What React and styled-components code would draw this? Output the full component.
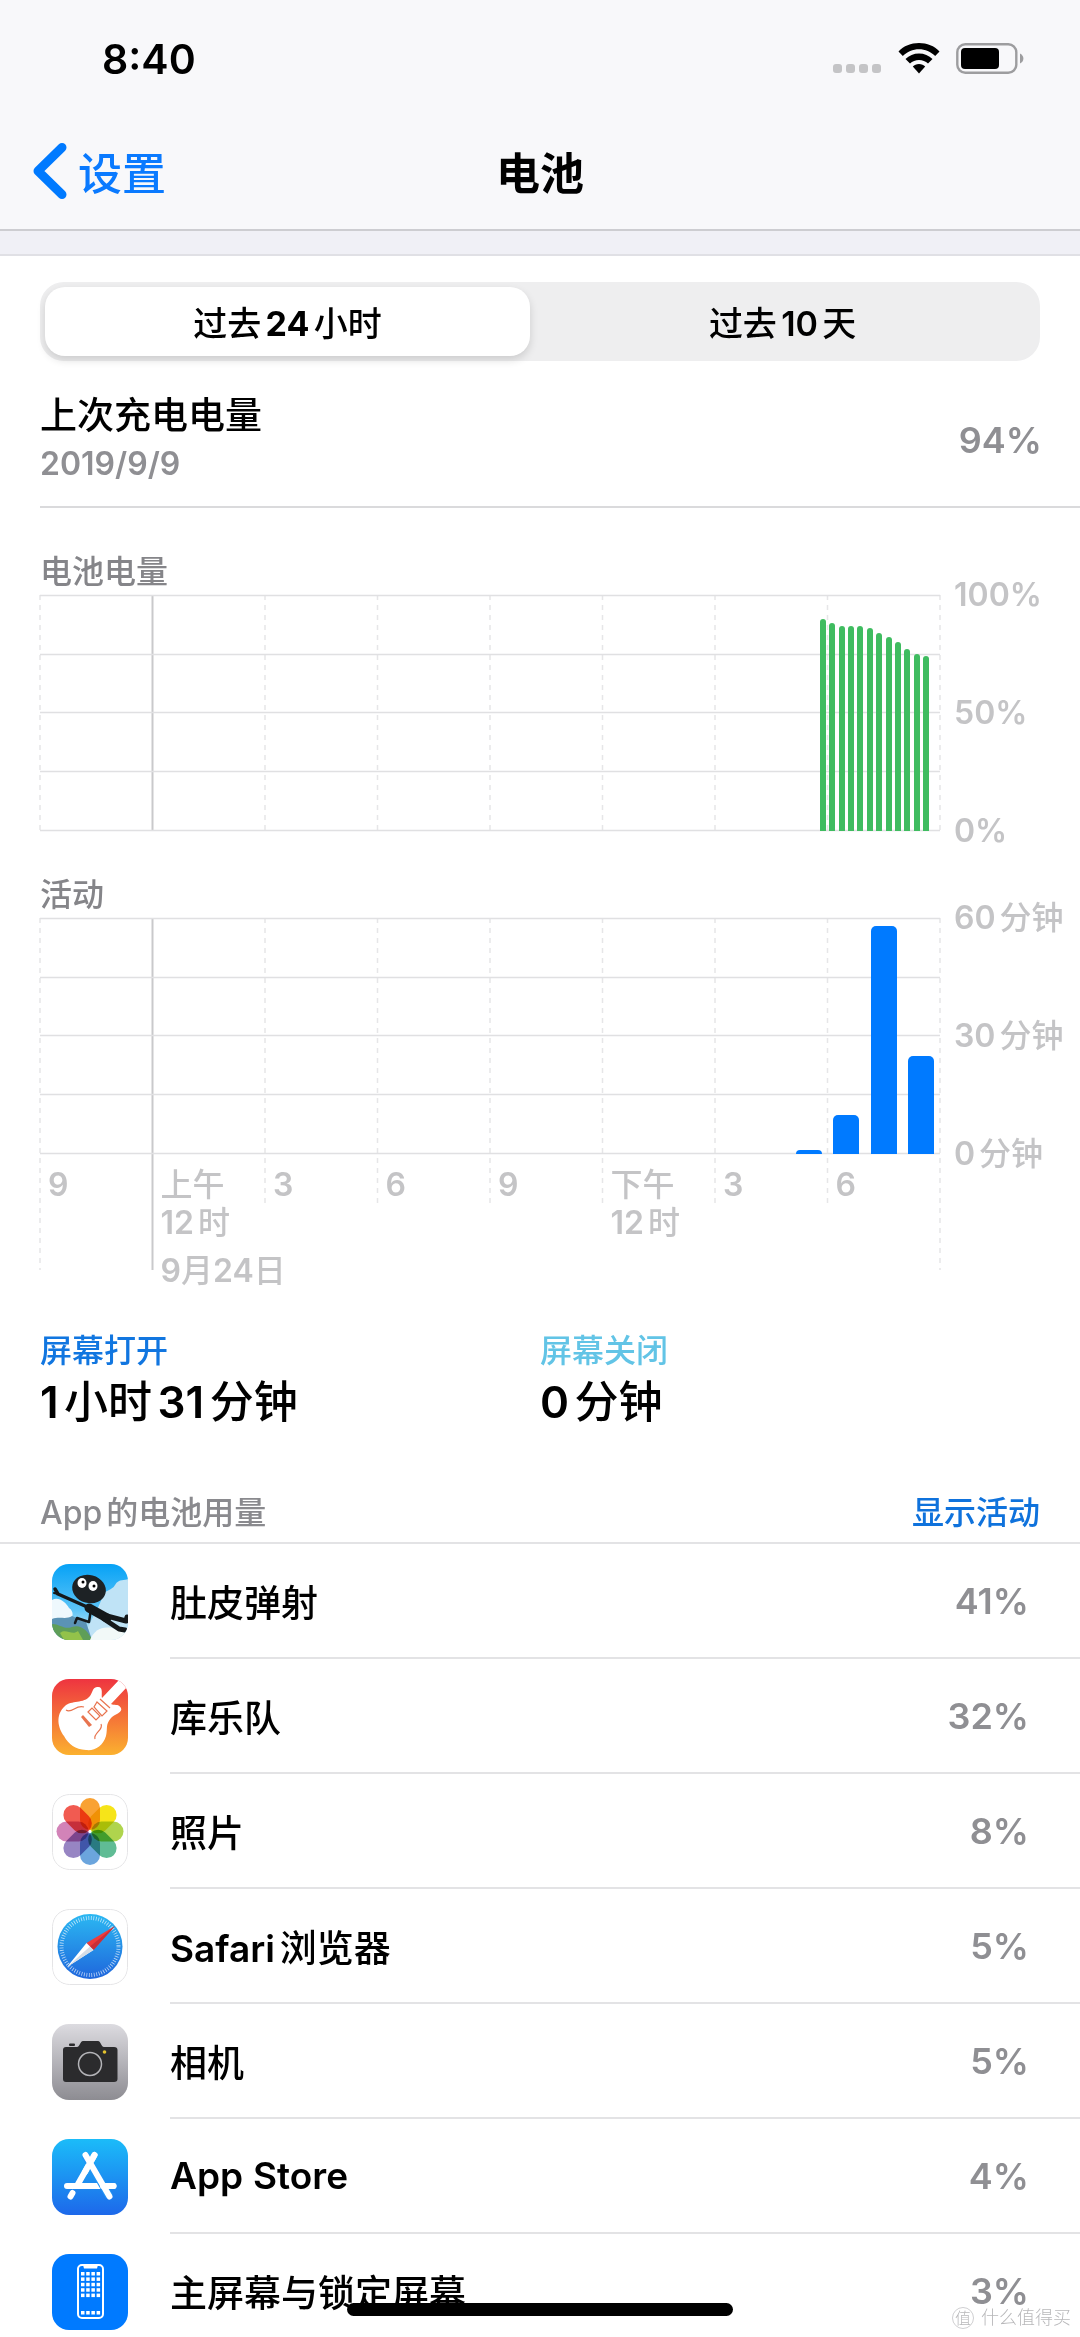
import { useState } from "react"
import styled, { createGlobalStyle } from "styled-components"

const GlobalStyle = createGlobalStyle`
  * {
    box-sizing: border-box;
  }

  body {
    margin: 0;
    background: #ffffff;
    color: #000000;
    font-family: Inter, "Noto Sans CJK SC", sans-serif;
    font-weight: 500;
    text-autospace: normal;
  }

  button {
    padding: 0;
    border: none;
    background: none;
    font: inherit;
    color: inherit;
    cursor: pointer;
  }
`

const Screen = styled.div`
  height: 100vh;
  display: flex;
  flex-direction: column;
`

const Header = styled.header`
  background: #f8f8fa;
  border-bottom: 2px solid #cdcdd1;
`

const StatusBar = styled.div`
  display: flex;
  justify-content: space-between;
  align-items: center;
  height: 117px;
  padding: 0 56px 0 102px;
`

const Clock = styled.time`
  font-size: 41px;
  font-weight: 600;
`

const StatusIcons = styled.div`
  display: flex;
  align-items: flex-end;
  gap: 16px;
`

const NavBar = styled.nav`
  display: grid;
  grid-template-columns: 1fr auto 1fr;
  align-items: center;
  height: 112px;
  padding: 0 32px 4px;
  font-size: 44px;
`

const BackLink = styled.a`
  display: flex;
  align-items: center;
  gap: 10px;
  color: #0a7aff;
  text-decoration: none;
`

const Title = styled.h1`
  margin: 0;
  font-size: 44px;
  font-weight: 700;
`

const Content = styled.main`
  flex: 1;
  overflow-y: auto;
  scrollbar-width: none;
`

const Band = styled.div`
  height: 25px;
  background: #f0f0f6;
  border-bottom: 2px solid #e0e0e5;
`

const Segmented = styled.div`
  display: grid;
  grid-template-columns: 49fr 51fr;
  margin: 26px 40px 0;
  padding: 5px;
  border-radius: 24px;
  background: #eeeeef;
`

const Segment = styled.button`
  height: 69px;
  border-radius: 20px;
  font-size: 34px;
  font-weight: ${(props) => (props.$active ? 700 : 600)};
  background: ${(props) => (props.$active ? "#ffffff" : "transparent")};
  box-shadow: ${(props) => (props.$active ? "0 4px 8px rgba(0, 0, 0, 0.14)" : "none")};
`

const SegmentText = styled.span`
  font-weight: 500;
`

const LastCharge = styled.section`
  display: flex;
  justify-content: space-between;
  align-items: center;
  margin-left: 40px;
  padding: 31px 38px 18px 0;
  border-bottom: 2px solid #dadadc;
`

const ChargeTitle = styled.div`
  font-size: 37px;
  line-height: 48px;
`

const ChargeDate = styled.div`
  font-size: 32px;
  font-weight: 600;
  line-height: 48px;
  color: #8f8f93;
`

const Percent = styled.span`
  font-size: 36px;
  font-weight: 600;
  line-height: 36px;
  color: #8f8f93;
`

const Latin = styled.span`
  font-weight: 600;
`

const Figure = styled.figure`
  margin: 0;
  padding: 44px 0 0 40px;
`

const FigureTitle = styled.figcaption`
  margin-bottom: 3px;
  font-size: 32px;
  line-height: 40px;
  color: #858589;
`

const ChartRow = styled.div`
  display: grid;
  grid-template-columns: 1fr 140px;
  align-items: start;
`

const PlotArea = styled.div`
  display: grid;

  > * {
    grid-area: 1 / 1;
  }
`

const Grid = styled.svg`
  display: block;
  width: 100%;
  height: ${(props) => props.$height}px;
  overflow: visible;
`

const Bars = styled.div`
  z-index: 1;
  display: flex;
  justify-content: flex-end;
  align-items: flex-end;
  height: 236px;
`

const Slot = styled.div`
  display: flex;
  justify-content: center;
  align-items: flex-end;
  width: calc(100% / ${(props) => props.$count});
  height: 100%;
`

const Bar = styled.div`
  width: ${(props) => props.$width}px;
  border-radius: ${(props) => props.$radius}px ${(props) => props.$radius}px 0 0;
  background: ${(props) => props.$color};
`

const Scale = styled.div`
  display: flex;
  flex-direction: column;
  justify-content: space-between;
  height: 276px;
  margin: -20px 0;
  padding-left: 14px;
  font-size: 32px;
  line-height: 40px;
  color: #c4c4c6;
  white-space: nowrap;
`

const TimeAxis = styled.div`
  align-self: end;
  display: grid;
  grid-template-columns: repeat(8, 1fr);
  row-gap: 10px;
  font-size: 32px;
  line-height: 38px;
  color: #c4c4c6;
`

const Tick = styled.div`
  height: 76px;
  padding-left: 8px;
  white-space: pre-line;
`

const AxisDate = styled.div`
  grid-column: 2 / 5;
  padding-left: 8px;
  text-autospace: no-autospace;
`

const Totals = styled.section`
  display: grid;
  grid-template-columns: 1fr 1fr;
  padding: 41px 40px 0;
`

const TotalLabel = styled.div`
  font-size: 32px;
  line-height: 40px;
  color: ${(props) => props.$color};
`

const TotalValue = styled.div`
  font-size: 44px;
  line-height: 62px;
`

const ListHeader = styled.div`
  display: flex;
  justify-content: space-between;
  padding: 60px 40px 9px;
  border-bottom: 2px solid #e3e3e5;
  font-size: 32px;
  line-height: 40px;
`

const ListTitle = styled.h2`
  margin: 0;
  font-size: 32px;
  font-weight: 500;
  color: #8a8a8e;
`

const ShowActivity = styled.button`
  color: #0f72dc;
`

const AppList = styled.ul`
  margin: 0;
  padding: 0;
  list-style: none;
`

const AppRow = styled.li`
  display: flex;
  align-items: center;
  gap: 42px;
  padding-left: 52px;
`

const AppInfo = styled.div`
  flex: 1;
  display: flex;
  justify-content: space-between;
  align-items: center;
  height: 115px;
  padding-right: 51px;
  border-bottom: 2px solid #e3e3e5;
  font-size: 37px;
`

const AppIcon = styled.svg`
  flex: none;
  width: 76px;
  height: 76px;
  border-radius: 17px;
`

const HomeIndicator = styled.div`
  position: fixed;
  left: 50%;
  bottom: 21px;
  width: 386px;
  height: 13px;
  margin-left: -193px;
  border-radius: 7px;
  background: #000000;
`

const Watermark = styled.div`
  position: fixed;
  right: 9px;
  bottom: 8px;
  display: flex;
  align-items: center;
  gap: 7px;
  font-size: 18px;
  font-weight: 300;
  line-height: 20px;
  color: #b8b8ba;
`

const WatermarkBadge = styled.span`
  width: 22px;
  height: 22px;
  border: 1px solid #cfcfd1;
  border-radius: 50%;
  font-size: 16px;
  line-height: 20px;
  text-align: center;
`

const levels = [90, 88, 87, 87, 87, 86, 84, 82, 80, 77, 75, 74]
const minutes = [1, 10, 58, 25]
const ticks = ["9", "上午\n12时", "3", "6", "9", "下午\n12时", "3", "6"]

// digits and latin words run one step heavier than the Chinese around them
const Mixed = ({ children }) =>
  children
    .split(/([A-Za-z0-9%]+)/)
    .map((part, i) => (i % 2 ? <Latin key={i}>{part}</Latin> : part))

const SignalDots = () => (
  <svg width="49" height="10" viewBox="0 0 49 10" fill="#c4c4c6">
    {[0, 13, 26, 39].map((x) => (
      <rect key={x} x={x} y="0" width="9" height="9" rx="3" />
    ))}
  </svg>
)

const Wifi = () => (
  <svg width="42" height="31" viewBox="0 0 42 31">
    <path d="M21 0C29 0 36.400 3 41.500 8.400L37.200 13C32.800 8.800 27.200 6.300 21 6.300S9.200 8.800 4.800 13L.5 8.400C5.600 3 13 0 21 0Z" />
    <path d="M21 10.500C26.200 10.500 31 12.500 34.500 16L30 20.600C27.600 18.300 24.500 17 21 17S14.400 18.300 12 20.600L7.500 16C11 12.500 15.800 10.500 21 10.500Z" />
    <path d="M21 21C23.700 21 25.600 22 27.200 23.600L21 30.600L14.800 23.600C16.400 22 18.300 21 21 21Z" />
  </svg>
)

const BatteryStatus = () => (
  <svg width="68" height="31" viewBox="0 0 68 31">
    <rect x="1.300" y="1.300" width="59" height="28.400" rx="8" fill="none" stroke="#9d9d9f" strokeWidth="2.400" />
    <rect x="5" y="5" width="38" height="21" rx="4" />
    <path d="M64 10.500C68.500 12.500 68.500 18.500 64 20.500Z" fill="#9d9d9f" />
  </svg>
)

const Chevron = () => (
  <svg width="36" height="58" viewBox="0 0 36 58" fill="none" stroke="#007aff" strokeWidth="9" strokeLinecap="round" strokeLinejoin="round">
    <path d="M30 5.500L6 29L30 52.500" />
  </svg>
)

const GameIcon = () => (
  <AppIcon viewBox="0 0 76 76">
    <defs>
      <linearGradient id="sky" x1="0" y1="0" x2="0" y2="1">
        <stop offset="0" stopColor="#06a2f6" />
        <stop offset="0.6" stopColor="#5cc4f7" />
        <stop offset="1" stopColor="#dff1f5" />
      </linearGradient>
    </defs>
    <rect width="76" height="76" fill="url(#sky)" />
    <path d="M50 34C52 25 60 27 63 21C67 14 73 17 76 15V76H36C30 66 42 56 50 34Z" fill="#bfe3f6" />
    <path d="M0 36C6 32 14 38 17 44C22 47 22 54 16 57H0Z" fill="#eef8fd" />
    <path d="M0 55C8 52 14 56 20 52L34 58L40 76H0Z" fill="#5b93b5" />
    <path d="M0 60C8 60 12 66 20 63C28 60 36 66 40 76H0Z" fill="#5f9e58" />
    <path d="M8 69C14 64 20 72 26 67L31 76H12Z" fill="#93c24a" />
    <path d="M38 76C42 66 50 62 60 64L76 70V76Z" fill="#f2f9f8" />
    <g fill="none" stroke="#15191b" strokeLinecap="round" strokeLinejoin="round">
      <path d="M3 25L6 30L33 42" strokeWidth="3.500" />
      <path d="M2 29L6 30" strokeWidth="2" />
      <path d="M39 45L37 58L25 54L23 59" strokeWidth="2.500" />
      <path d="M37 44L55 54" strokeWidth="9" />
      <path d="M55 52L74 57L75 53" strokeWidth="5" />
      <path d="M52 55L67 65L73 66" strokeWidth="5" />
    </g>
    <ellipse cx="37" cy="25" rx="17" ry="14" fill="#1d2225" transform="rotate(15 37 25)" />
    <ellipse cx="30" cy="19" rx="4.500" ry="5" fill="#ffffff" />
    <ellipse cx="41" cy="22" rx="4.500" ry="5" fill="#ffffff" />
    <circle cx="31" cy="18" r="1.500" />
    <circle cx="42" cy="22" r="1.500" />
  </AppIcon>
)

const GarageBandIcon = () => (
  <AppIcon viewBox="0 0 76 76">
    <defs>
      <linearGradient id="garage" x1="0" y1="0" x2="0" y2="1">
        <stop offset="0" stopColor="#ee3440" />
        <stop offset="1" stopColor="#fbb12f" />
      </linearGradient>
    </defs>
    <rect width="76" height="76" fill="url(#garage)" />
    <path
      d="M13 27C19 21 32 25 38 17C41 13 40 9 45 8C52 7 49 15 50 19L67 1L76 0V7L59 25C62 27 66 24 69 29C71 34 62 35 59 39C53 46 56 49 54 57C51 67 43 72 34 71C23 70 17 66 12 57C6 49 3 36 13 27Z"
      fill="#ffffff"
    />
    <g fill="none" stroke="#e8744f" strokeWidth="1.200">
      <path d="M14 31C20 35 24 25 32 28" />
      <path d="M43 60C41 54 52 51 49 45" />
      <path d="M36 33L40 29L48 37L44 41Z" />
      <path d="M45 23L55 32L50 37L42 28Z" />
      <path d="M48 20L58 29" />
    </g>
    <path d="M29 38L31 36L40 46L37 48Z" fill="#e8744f" />
  </AppIcon>
)

const petals = ["#f8981d", "#f5e100", "#a6cf3a", "#4fb58a", "#5b9bd9", "#8c78bd", "#cd75b0", "#f0493e"]

const PhotosIcon = () => (
  <AppIcon viewBox="0 0 76 76">
    <rect x="0.500" y="0.500" width="75" height="75" rx="17" fill="#ffffff" stroke="#e4e4e6" />
    {petals.map((color, i) => (
      <rect
        key={color}
        x="28"
        y="4"
        width="20"
        height="32"
        rx="10"
        fill={color}
        fillOpacity="0.9"
        transform={`rotate(${i * 45} 38 37.500)`}
        style={{ mixBlendMode: "multiply" }}
      />
    ))}
  </AppIcon>
)

const SafariIcon = () => (
  <AppIcon viewBox="0 0 76 76">
    <defs>
      <linearGradient id="safari" x1="0" y1="0" x2="0" y2="1">
        <stop offset="0" stopColor="#2bb8f2" />
        <stop offset="1" stopColor="#1f66dc" />
      </linearGradient>
    </defs>
    <rect x="0.500" y="0.500" width="75" height="75" rx="17" fill="#ffffff" stroke="#e4e4e6" />
    <circle cx="38" cy="37.500" r="32.500" fill="url(#safari)" />
    <circle cx="38" cy="37.500" r="28.500" fill="none" stroke="#ffffff" strokeOpacity="0.7" strokeWidth="4" strokeDasharray="0.8 1.700" />
    <path d="M63 17L34.500 34L41.500 41Z" fill="#ee3b3c" />
    <path d="M15 58L34.500 34L41.500 41Z" fill="#ffffff" />
    <path d="M63 17L41.500 41L38 37.500Z" fill="#c92f38" />
    <path d="M15 58L41.500 41L38 37.500Z" fill="#d5dde6" />
  </AppIcon>
)

const CameraIcon = () => (
  <AppIcon viewBox="0 0 76 76">
    <defs>
      <linearGradient id="camera" x1="0" y1="0" x2="0" y2="1">
        <stop offset="0" stopColor="#dcdbe0" />
        <stop offset="1" stopColor="#8d8c92" />
      </linearGradient>
    </defs>
    <rect width="76" height="76" fill="url(#camera)" />
    <path
      d="M14 23H25C28 23 28 17 31 17H46C49 17 49 23 52 23H62Q65.500 23 65.500 26V55Q65.500 58 62 58H14Q11 58 11 55V26Q11 23 14 23Z"
      fill="#2b2b2d"
    />
    <rect x="17" y="19.500" width="6" height="2.500" rx="1" fill="#2b2b2d" />
    <circle cx="38" cy="40" r="11.500" fill="#2b2b2d" stroke="#b4b4b8" strokeWidth="1.500" />
    <circle cx="52.500" cy="28" r="1.800" fill="#e3c22e" />
  </AppIcon>
)

const AppStoreIcon = () => (
  <AppIcon viewBox="0 0 76 76">
    <defs>
      <linearGradient id="store" x1="0" y1="0" x2="0" y2="1">
        <stop offset="0" stopColor="#1bbcf9" />
        <stop offset="1" stopColor="#1d68ea" />
      </linearGradient>
    </defs>
    <rect width="76" height="76" fill="url(#store)" />
    <g fill="none" stroke="#ffffff" strokeWidth="6" strokeLinecap="round">
      <path d="M42.500 16L26 45" />
      <path d="M20.500 54L18.500 57.500" />
      <path d="M15 47H61.500" />
    </g>
    <path d="M33 16L57.500 57.500" stroke="#2394f4" strokeWidth="8" />
    <path d="M33.500 16L57.500 57.500" stroke="#ffffff" strokeWidth="6" strokeLinecap="round" />
    <path d="M42.500 16L33 33" stroke="#ffffff" strokeWidth="6" strokeLinecap="round" />
    <path d="M51 47H61.500" stroke="#ffffff" strokeWidth="6" strokeLinecap="round" />
  </AppIcon>
)

const HomeScreenIcon = () => (
  <AppIcon viewBox="0 0 76 76">
    <rect width="76" height="76" fill="#007aff" />
    <rect x="26" y="11" width="25" height="53" rx="4" fill="none" stroke="#ffffff" strokeWidth="2" />
    <path d="M31 11H46L45 14.500H32Z" fill="#ffffff" />
    {[18, 23.4, 28.8, 34.2, 39.6, 57].map((y) =>
      [29, 34.2, 39.4, 44.6].map((x) => (
        <rect key={`${x}-${y}`} x={x} y={y} width="3.500" height="3.500" fill="#ffffff" />
      ))
    )}
  </AppIcon>
)

const apps = [
  { name: "肚皮弹射", usage: "41%", Icon: GameIcon },
  { name: "库乐队", usage: "32%", Icon: GarageBandIcon },
  { name: "照片", usage: "8%", Icon: PhotosIcon },
  { name: "Safari浏览器", usage: "5%", Icon: SafariIcon },
  { name: "相机", usage: "5%", Icon: CameraIcon },
  { name: "App Store", usage: "4%", Icon: AppStoreIcon },
  { name: "主屏幕与锁定屏幕", usage: "3%", Icon: HomeScreenIcon },
]

// midnight is the solid line, the outer lines run down past the time labels
const ChartGrid = ({ height, tickEnd }) => (
  <Grid $height={height} aria-hidden="true">
    {[0, 1, 2, 3, 4, 5, 6, 7, 8].map((i) => (
      <line
        key={i}
        x1={`${i * 12.5}%`}
        x2={`${i * 12.5}%`}
        y1="0"
        y2={i === 0 || i === 1 || i === 8 ? Math.min(height, tickEnd + 63) : tickEnd}
        stroke={i === 1 ? "#c9c9cb" : "#e6e6e8"}
        strokeWidth={i === 1 ? 2 : 1.5}
        strokeDasharray={i === 1 ? "none" : "5 5"}
      />
    ))}
    {[0, 59, 117, 176, 235].map((y) => (
      <line key={y} x1="0" x2="100%" y1={y + 0.5} y2={y + 0.5} stroke="#e0e0e2" strokeWidth="1.500" />
    ))}
  </Grid>
)

export default function App() {
  const [range, setRange] = useState("24h")

  return (
    <Screen>
      <GlobalStyle />
      <Header>
        <StatusBar>
          <Clock>8:40</Clock>
          <StatusIcons>
            <SignalDots />
            <Wifi />
            <BatteryStatus />
          </StatusIcons>
        </StatusBar>
        <NavBar>
          <BackLink href="#settings">
            <Chevron />
            设置
          </BackLink>
          <Title>电池</Title>
        </NavBar>
      </Header>

      <Content>
        <Band />
        <Segmented>
          <Segment $active={range === "24h"} aria-pressed={range === "24h"} onClick={() => setRange("24h")}>
            <SegmentText>过去</SegmentText>24<SegmentText>小时</SegmentText>
          </Segment>
          <Segment $active={range === "10d"} aria-pressed={range === "10d"} onClick={() => setRange("10d")}>
            <SegmentText>过去</SegmentText>10<SegmentText>天</SegmentText>
          </Segment>
        </Segmented>

        <LastCharge>
          <div>
            <ChargeTitle>上次充电电量</ChargeTitle>
            <ChargeDate>2019/9/9</ChargeDate>
          </div>
          <Percent>94%</Percent>
        </LastCharge>

        <Figure>
          <FigureTitle>电池电量</FigureTitle>
          <ChartRow>
            <PlotArea>
              <ChartGrid height={236} tickEnd={236} />
              <Bars>
                {levels.map((level, i) => (
                  <Slot key={i} $count={96}>
                    <Bar $width={6} $radius={3} $color="#3fbc60" style={{ height: `${level}%` }} />
                  </Slot>
                ))}
                <Slot $count={96} />
              </Bars>
            </PlotArea>
            <Scale>
              <Latin>100%</Latin>
              <Latin>50%</Latin>
              <Latin>0%</Latin>
            </Scale>
          </ChartRow>
        </Figure>

        <Figure>
          <FigureTitle>活动</FigureTitle>
          <ChartRow>
            <PlotArea>
              <ChartGrid height={372} tickEnd={289} />
              <Bars>
                {minutes.map((value, i) => (
                  <Slot key={i} $count={24}>
                    <Bar $width={26} $radius={5} $color="#007aff" style={{ height: `${(value / 60) * 100}%` }} />
                  </Slot>
                ))}
              </Bars>
              <TimeAxis>
                {ticks.map((tick, i) => (
                  <Tick key={i}>
                    <Mixed>{tick}</Mixed>
                  </Tick>
                ))}
                <AxisDate>
                  <Mixed>9月24日</Mixed>
                </AxisDate>
              </TimeAxis>
            </PlotArea>
            <Scale>
              {["60分钟", "30分钟", "0分钟"].map((label) => (
                <span key={label}>
                  <Mixed>{label}</Mixed>
                </span>
              ))}
            </Scale>
          </ChartRow>
        </Figure>

        <Totals>
          <div>
            <TotalLabel $color="#1176e0">屏幕打开</TotalLabel>
            <TotalValue>
              <Mixed>1小时31分钟</Mixed>
            </TotalValue>
          </div>
          <div>
            <TotalLabel $color="#62c4e6">屏幕关闭</TotalLabel>
            <TotalValue>
              <Mixed>0分钟</Mixed>
            </TotalValue>
          </div>
        </Totals>

        <ListHeader>
          <ListTitle>App的电池用量</ListTitle>
          <ShowActivity>显示活动</ShowActivity>
        </ListHeader>
        <AppList>
          {apps.map(({ name, usage, Icon }) => (
            <AppRow key={name}>
              <Icon />
              <AppInfo>
                <span>
                  <Mixed>{name}</Mixed>
                </span>
                <Percent>{usage}</Percent>
              </AppInfo>
            </AppRow>
          ))}
        </AppList>
      </Content>

      <HomeIndicator />
      <Watermark>
        <WatermarkBadge>值</WatermarkBadge>
        什么值得买
      </Watermark>
    </Screen>
  )
}
